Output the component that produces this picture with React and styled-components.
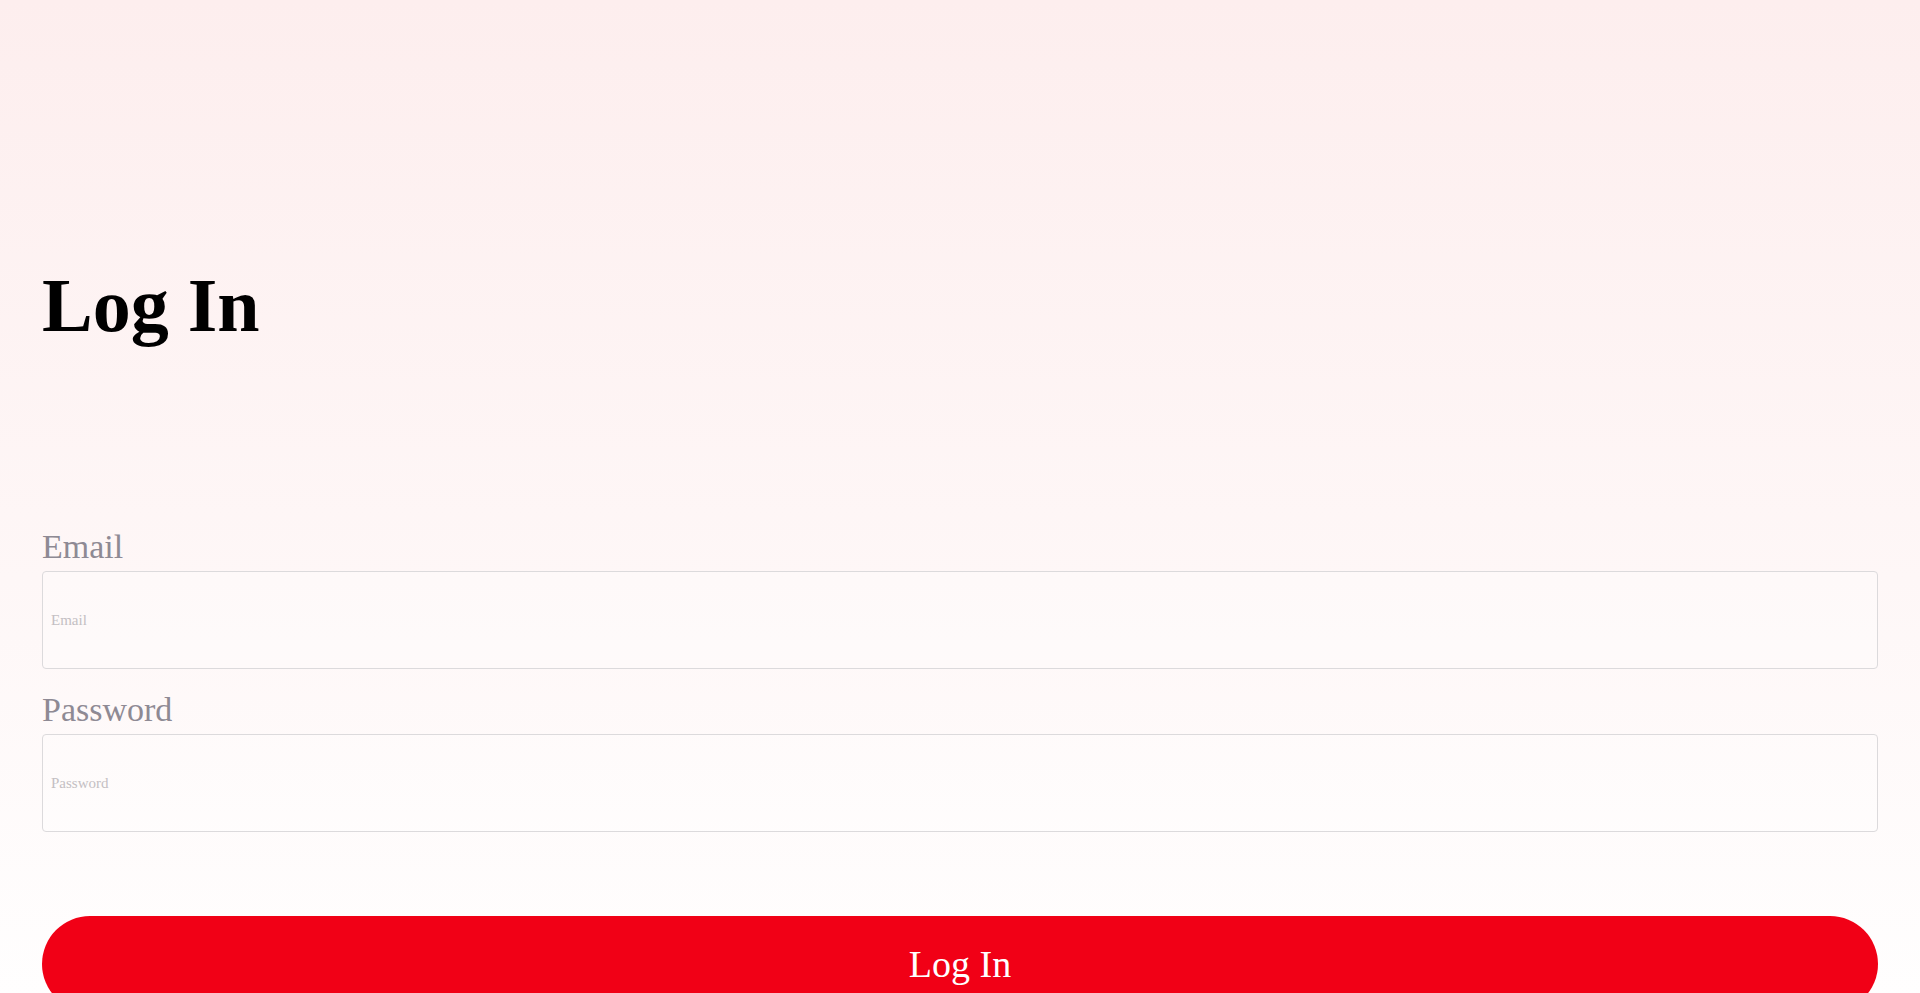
import styled, { createGlobalStyle } from 'styled-components';

const GlobalStyle = createGlobalStyle`
  * {
    box-sizing: border-box;
  }
  html, body {
    margin: 0;
    padding: 0;
  }
  body {
    font-family: 'Liberation Serif', 'Times New Roman', serif;
    background: #fff;
  }
`;

export default function App() {
  return (
    <>
      <GlobalStyle />
      <Page>
        <Title>Log In</Title>
        <Form onSubmit={(e) => e.preventDefault()}>
          <Field>
            <Label htmlFor="email">Email</Label>
            <Input id="email" type="email" placeholder="Email" />
          </Field>
          <Field>
            <Label htmlFor="password">Password</Label>
            <Input id="password" type="password" placeholder="Password" />
          </Field>
          <SubmitButton type="submit">Log In</SubmitButton>
        </Form>
      </Page>
    </>
  );
}

const Page = styled.main`
  min-height: 100vh;
  padding: 262px 42px 40px;
  background: linear-gradient(180deg, #fdeeee 0%, #fef7f7 55%, #ffffff 100%);
`;

const Title = styled.h1`
  margin: 0;
  font-size: 76px;
  font-weight: 700;
  line-height: 86px;
  color: #000;
`;

const Form = styled.form`
  display: flex;
  flex-direction: column;
  margin-top: 179px;
`;

const Field = styled.div`
  display: flex;
  flex-direction: column;
  gap: 5px;
  & + & {
    margin-top: 21px;
  }
`;

const Label = styled.label`
  font-size: 34px;
  line-height: 39px;
  color: #8e8a94;
`;

const Input = styled.input`
  width: 100%;
  height: 98px;
  padding: 0 8px;
  border: 1px solid #dcdadc;
  border-radius: 4px;
  background: rgba(255, 255, 255, 0.25);
  font-family: 'Liberation Serif', 'Times New Roman', serif;
  font-size: 15px;
  color: #333;
  outline: none;
  &::placeholder {
    color: #c4bfc3;
  }
`;

const SubmitButton = styled.button`
  margin-top: 84px;
  width: 100%;
  height: 96px;
  border: none;
  border-radius: 48px;
  background: #f10016;
  color: #fff;
  font-family: 'Liberation Serif', 'Times New Roman', serif;
  font-size: 38px;
  cursor: pointer;
`;
